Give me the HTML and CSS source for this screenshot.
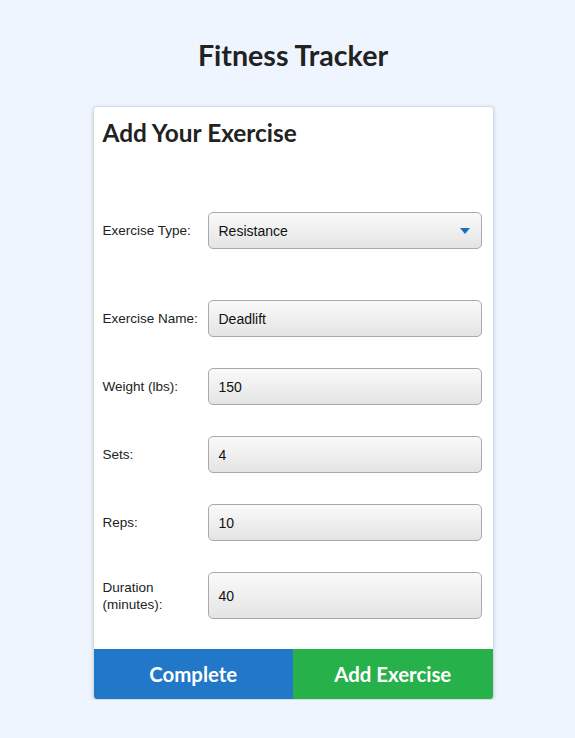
FILE: index.html
```html
<!DOCTYPE html>
<html lang="en">
	<head>
		<meta charset="UTF-8" />
		<meta name="viewport" content="width=device-width, initial-scale=1.0" />
		<title>Fitness Tracker</title>
		<link rel="stylesheet" href="styles.css">
	</head>
	<body>
		<h1 class="title">Fitness Tracker</h1>
		<div class="card">
			<div class="card-body">
				<h2 class="card-title">Add Your Exercise</h2>
				<div class="row row-type">
					<label class="label">Exercise Type:</label>
					<div class="select">
						<span>Resistance</span>
						<svg class="arrow" width="10" height="6" viewBox="0 0 10 6"><path d="M0 0H10L5 6Z" fill="#1c6fb5"/></svg>
					</div>
				</div>
				<div class="row">
					<label class="label">Exercise Name:</label>
					<div class="input">Deadlift</div>
				</div>
				<div class="row">
					<label class="label">Weight (lbs):</label>
					<div class="input">150</div>
				</div>
				<div class="row">
					<label class="label">Sets:</label>
					<div class="input">4</div>
				</div>
				<div class="row">
					<label class="label">Reps:</label>
					<div class="input">10</div>
				</div>
				<div class="row">
					<label class="label">Duration<br />(minutes):</label>
					<div class="input tall">40</div>
				</div>
			</div>
			<div class="buttons">
				<button class="btn btn-blue">Complete</button>
				<button class="btn btn-green">Add Exercise</button>
			</div>
		</div>
	</body>
</html>
```

FILE: styles.css
```css
* {
	margin: 0;
	padding: 0;
	box-sizing: border-box;
}
body {
	background-color: #eef5fe;
	font-family: "Liberation Sans", Arial, sans-serif;
	color: #222;
	padding: 38px 0 0 11px;
}
.title {
	font-family: Lato, sans-serif;
	font-weight: 700;
	font-size: 28.6px;
	line-height: 34px;
	text-align: center;
	color: #222;
}
.card {
	width: 401px;
	margin: 34px auto 0;
	background-color: #fff;
	border: 1px solid #d6dbe1;
	border-radius: 4px;
	box-shadow: 0 1px 4px rgba(0, 0, 0, 0.15);
	overflow: hidden;
}
.card-body {
	display: flex;
	flex-direction: column;
	padding: 10px 10px 30px 9px;
}
.card-title {
	font-family: Lato, sans-serif;
	font-weight: 700;
	font-size: 24.4px;
	line-height: 32px;
	color: #222;
}
.row {
	display: flex;
	align-items: center;
	margin-top: 31px;
}
.row-type {
	margin-top: 63px;
	margin-bottom: 20px;
}
.label {
	width: 105px;
	flex-shrink: 0;
	font-size: 13.5px;
	line-height: 17px;
	color: #222;
}
.input,
.select {
	flex: 1;
	height: 37px;
	display: flex;
	align-items: center;
	padding: 0 10px;
	font-size: 14px;
	color: #111;
	border: 1px solid #a9a9a9;
	border-radius: 5px;
	background: linear-gradient(#fafafa, #e4e4e4);
	margin-right: 1px;
}
.input.tall {
	height: 47px;
}
.select {
	justify-content: space-between;
}
.arrow {
	margin-right: 1px;
}
.buttons {
	display: flex;
}
.btn {
	flex: 1;
	height: 50px;
	border: none;
	color: #fff;
	font-family: Lato, sans-serif;
	font-weight: 700;
	font-size: 20.4px;
}
.btn-blue {
	background-color: #2178c8;
}
.btn-green {
	background-color: #27b14a;
}
```
